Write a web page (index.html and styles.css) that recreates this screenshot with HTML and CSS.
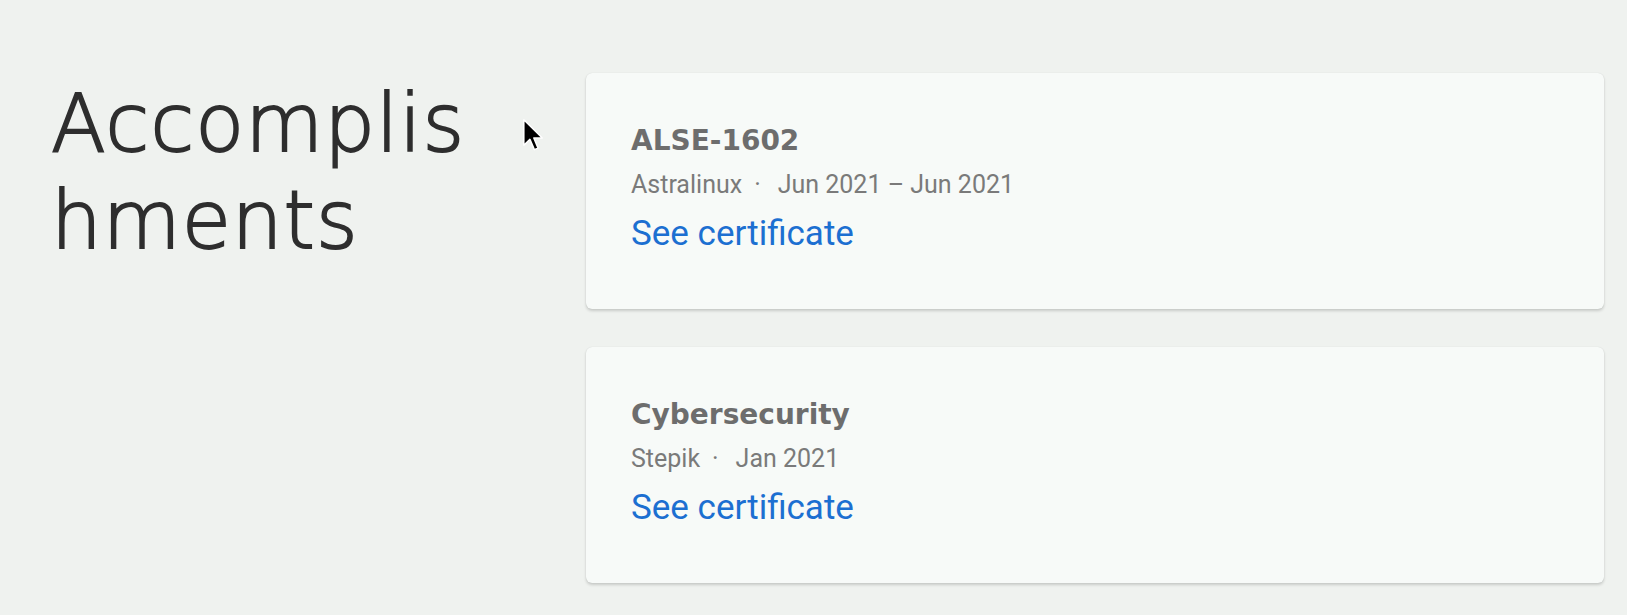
FILE: index.html
```html
<!DOCTYPE html>
<html lang="en">
<head>
<meta charset="utf-8">
<title>Accomplishments</title>
<link rel="stylesheet" href="styles.css">
</head>
<body>
<main class="section">
  <div class="side">
    <h2 class="heading">Accomplishments</h2>
  </div>
  <div class="list">
    <article class="card">
      <h3 class="card-title">ALSE-1602</h3>
      <p class="card-meta"><span>Astralinux</span><span class="dot">·</span><span>Jun 2021 – Jun 2021</span></p>
      <a class="card-link" href="#">See certificate</a>
    </article>
    <article class="card">
      <h3 class="card-title">Cybersecurity</h3>
      <p class="card-meta"><span>Stepik</span><span class="dot">·</span><span>Jan 2021</span></p>
      <a class="card-link" href="#">See certificate</a>
    </article>
  </div>
</main>
<svg class="cursor" width="24" height="34" viewBox="0 0 14 20" aria-hidden="true">
  <path d="M1 1 L1 16 L4.6 12.6 L7.2 18.6 L9.4 17.7 L6.9 11.8 L11.9 11.8 Z" fill="#000" stroke="#fff" stroke-width="0.9" stroke-linejoin="round"/>
</svg>
</body>
</html>
```

FILE: styles.css
```css
html, body {
  margin: 0;
  padding: 0;
}

body {
  background: #eff2ef;
  width: 1627px;
  height: 615px;
  overflow: hidden;
  position: relative;
}

.section {
  display: grid;
  grid-template-columns: 543px 1fr;
  padding: 73px 23px 0 43px;
}

.side {
  min-width: 0;
  padding-left: 8px;
}

.heading {
  width: 440px;
  margin: 2px 0 0 0;
  font-family: "DejaVu Sans", "Open Sans", sans-serif;
  font-weight: 300;
  font-size: 80px;
  line-height: 97px;
  letter-spacing: 1px;
  color: #2e2e2e;
  -webkit-text-stroke: 1.8px #2e2e2e;
  word-break: break-all;
}

.list {
  display: flex;
  flex-direction: column;
  gap: 38px;
}

.card {
  background: #f7faf8;
  border-radius: 6px;
  box-shadow: 0 2px 3px rgba(0, 0, 0, 0.16), 0 0 1px rgba(0, 0, 0, 0.14);
  padding: 50px 42px 53px 45px;
  display: flex;
  flex-direction: column;
  align-items: flex-start;
}

.card-title {
  margin: 0;
  font-family: "DejaVu Sans", sans-serif;
  font-weight: 700;
  font-size: 28px;
  line-height: 36px;
  color: #6d6d6d;
}

.card-meta {
  margin: 10px 0 0 0;
  font-family: Roboto, "Liberation Sans", sans-serif;
  font-size: 25px;
  line-height: 32px;
  color: #7a7a7a;
  display: flex;
}

.dot {
  margin: 0 17px 0 12px;
}

.card-link {
  margin-top: 10px;
  font-family: Roboto, "Liberation Sans", sans-serif;
  font-size: 35px;
  line-height: 45px;
  color: #1c6fd1;
  text-decoration: none;
}

.cursor {
  position: absolute;
  left: 522px;
  top: 118px;
}
```
